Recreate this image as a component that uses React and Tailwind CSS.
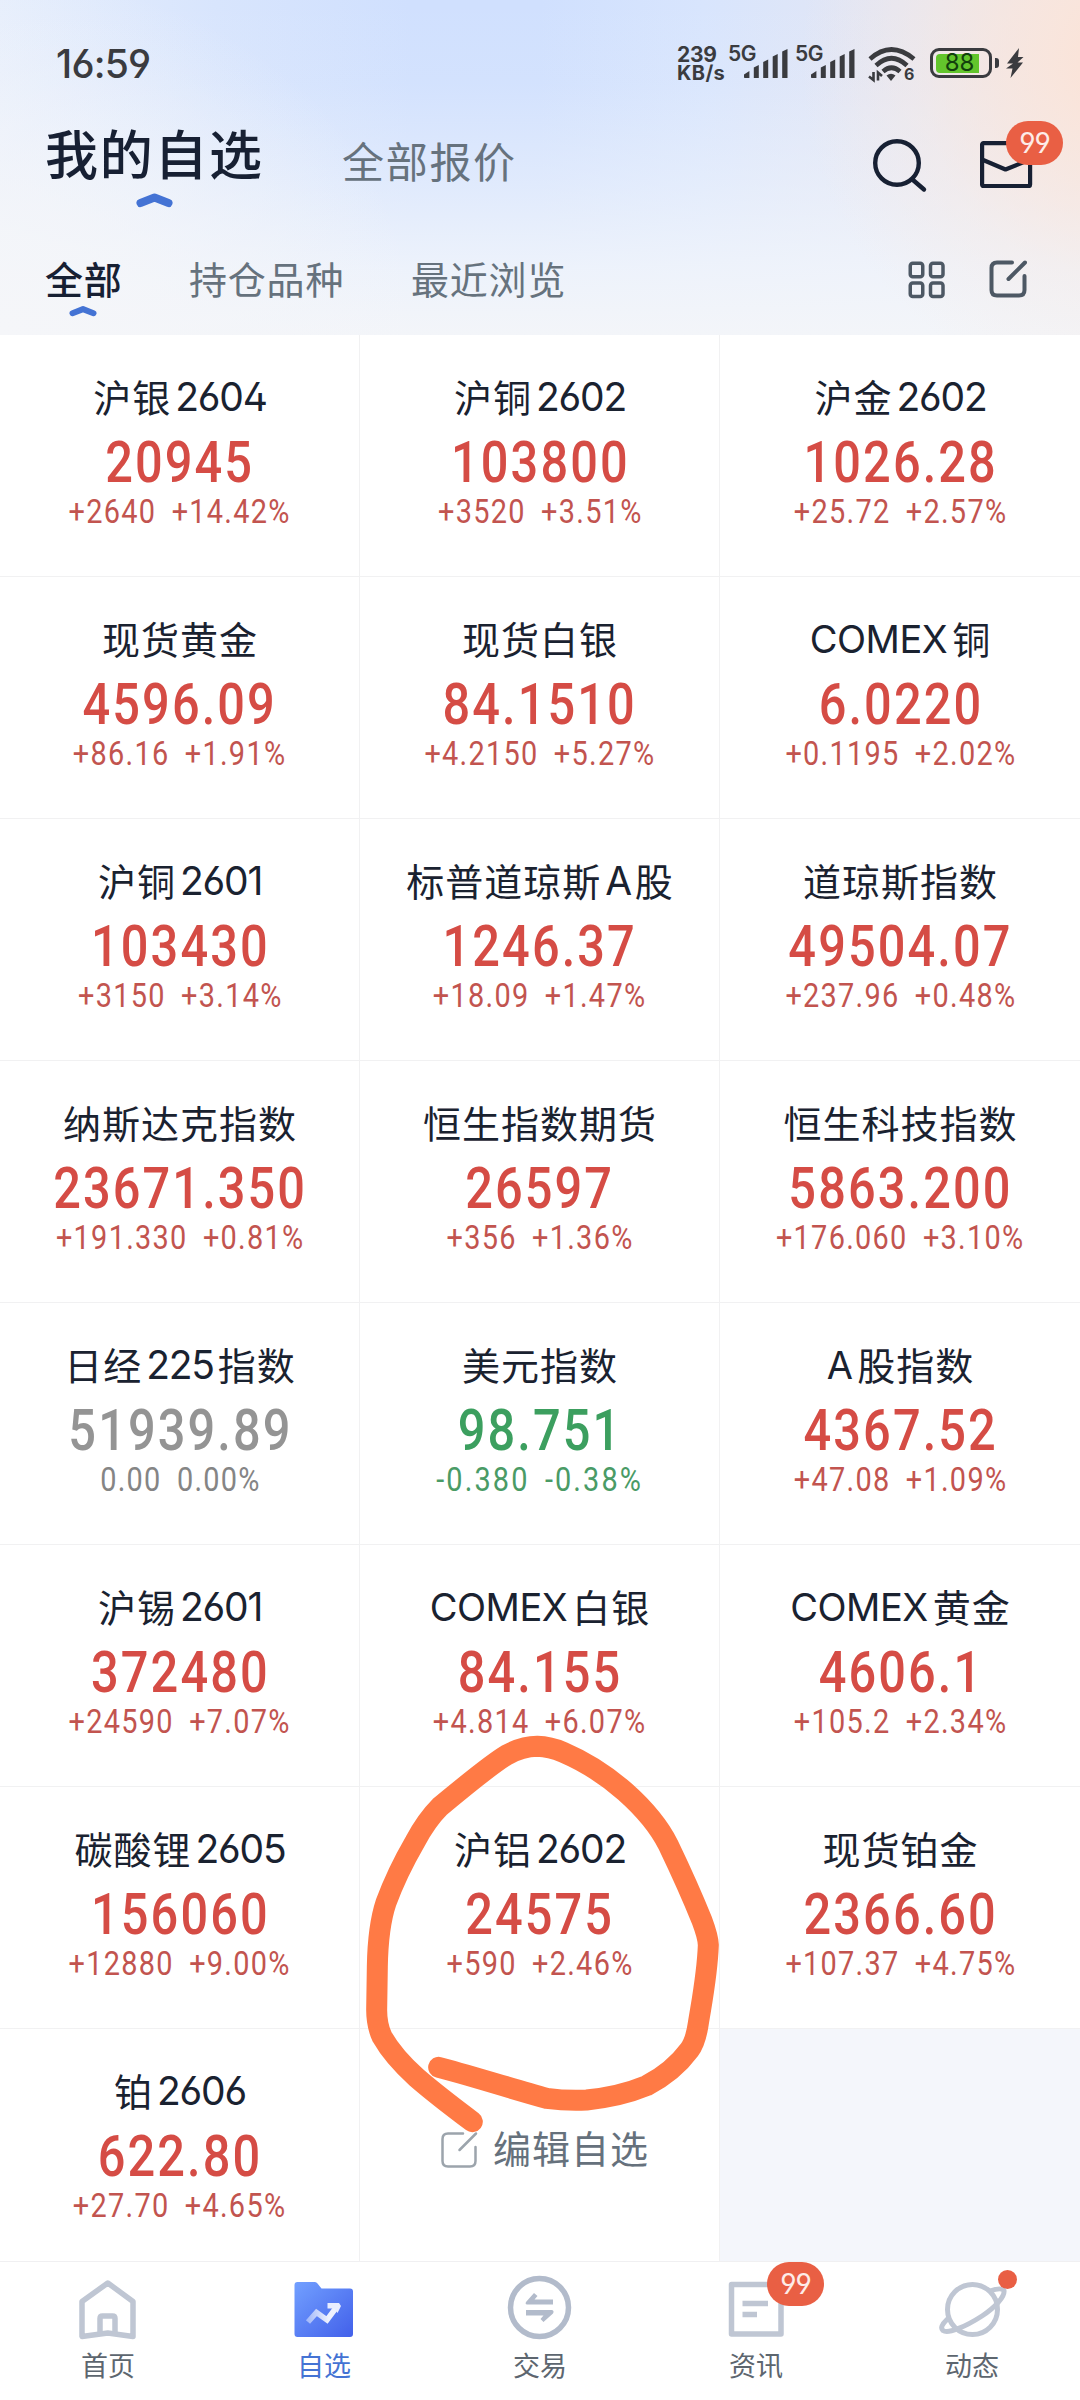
const quotes = [
  { name: "沪银", code: "2604", price: "20945", diff: "+2640", pct: "+14.42%" },
  { name: "沪铜", code: "2602", price: "103800", diff: "+3520", pct: "+3.51%" },
  { name: "沪金", code: "2602", price: "1026.28", diff: "+25.72", pct: "+2.57%" },
  { name: "现货黄金", price: "4596.09", diff: "+86.16", pct: "+1.91%" },
  { name: "现货白银", price: "84.1510", diff: "+4.2150", pct: "+5.27%" },
  { prefix: "COMEX", name: "铜", price: "6.0220", diff: "+0.1195", pct: "+2.02%" },
  { name: "沪铜", code: "2601", price: "103430", diff: "+3150", pct: "+3.14%" },
  { name: "标普道琼斯", code: "A", suffix: "股", price: "1246.37", diff: "+18.09", pct: "+1.47%" },
  { name: "道琼斯指数", price: "49504.07", diff: "+237.96", pct: "+0.48%" },
  { name: "纳斯达克指数", price: "23671.350", diff: "+191.330", pct: "+0.81%" },
  { name: "恒生指数期货", price: "26597", diff: "+356", pct: "+1.36%" },
  { name: "恒生科技指数", price: "5863.200", diff: "+176.060", pct: "+3.10%" },
  { name: "日经", code: "225", suffix: "指数", price: "51939.89", diff: "0.00", pct: "0.00%", trend: "flat" },
  { name: "美元指数", price: "98.751", diff: "-0.380", pct: "-0.38%", trend: "down" },
  { prefix: "A", name: "股指数", price: "4367.52", diff: "+47.08", pct: "+1.09%" },
  { name: "沪锡", code: "2601", price: "372480", diff: "+24590", pct: "+7.07%" },
  { prefix: "COMEX", name: "白银", price: "84.155", diff: "+4.814", pct: "+6.07%" },
  { prefix: "COMEX", name: "黄金", price: "4606.1", diff: "+105.2", pct: "+2.34%" },
  { name: "碳酸锂", code: "2605", price: "156060", diff: "+12880", pct: "+9.00%" },
  { name: "沪铝", code: "2602", price: "24575", diff: "+590", pct: "+2.46%" },
  { name: "现货铂金", price: "2366.60", diff: "+107.37", pct: "+4.75%" },
  { name: "铂", code: "2606", price: "622.80", diff: "+27.70", pct: "+4.65%" },
];

const priceColors = {
  up: "text-[#d54c45]",
  down: "text-[#3c9f5f]",
  flat: "text-[#949494]",
};

const diffColors = {
  up: "tracking-[1.500px] text-[#c2544f]",
  down: "tracking-[2.500px] text-[#4a9b66]",
  flat: "tracking-[1.500px] text-[#858585]",
};

function Signal() {
  return (
    <div className="relative h-[34px] w-[61px]">
      <span className="absolute left-0 top-0 font-['Inter'] text-[21px] font-semibold leading-[18px] tracking-[-0.5px]">
        5G
      </span>
      <svg className="absolute left-4 top-1" width="45" height="30" viewBox="0 0 45 30" fill="currentColor">
        <path d="M0 25.5 5.4 22v7H.8q-.8 0-.8-.8zM9.8 18.5l5-2.500V29h-5zM19.2 13l5-2.500V29h-5zM28.700 7.500l5-2.500V29h-5zM38.200 2.500l5.300-2.500V29h-5.300z" />
      </svg>
    </div>
  );
}

function StatusBar() {
  return (
    <div className="flex h-[84px] items-end pl-[56px] pr-[56px] text-[#3a3b3f]">
      <span className="font-['Inter'] text-[39px] font-medium leading-[40px] tracking-[-0.8px] [font-feature-settings:'ss01']">16:59</span>
      <div className="ml-auto flex items-start">
        <div className="w-[51px] font-['Inter'] text-[21px] font-bold leading-[19px]">
          <div className="tracking-[-0.3px]">239</div>
          <div className="text-[20px] tracking-[0.4px]">KB/s</div>
        </div>
        <Signal />
        <div className="ml-[6px]">
          <Signal />
        </div>
        {/* wifi 6 */}
        <svg className="ml-[12px] mt-[1px]" width="48" height="38" viewBox="0 0 48 38" fill="none" stroke="currentColor" strokeWidth="4.600">
          <path d="M2 13Q23 -6 46 13M8 19.500Q23.500 5 39 19.500M15 25.500Q23.500 18 32 25.500" />
          <path d="M18.500 29.500Q23 26 27.500 29.500L23 35z" fill="currentColor" stroke="none" />
          <path d="M5.500 26v8L1 30.500M10 34.500v-8l4 3.500" strokeWidth="2.600" />
          <text x="36" y="34" fill="currentColor" stroke="none" className="font-['Inter'] text-[16px] font-bold">
            6
          </text>
        </svg>
        <div className="ml-[14px] mt-[3px] flex h-[30px] w-[62px] items-center rounded-[9px] border-[3px] border-[#3a3b3f] px-[3px]">
          <div className="flex h-[19px] w-[43px] items-center justify-center rounded-l-[4px] bg-[#62c52c] pl-[4px] font-['Inter'] text-[24px] leading-none text-[#12400d]">
            88
          </div>
        </div>
        <div className="ml-[3px] mt-[13px] h-[10px] w-[4px] rounded-r-[3px] bg-[#3a3b3f]" />
        <svg className="ml-[7px] mt-[3px]" width="18" height="30" viewBox="0 0 18 30" fill="currentColor">
          <path d="M13 0 1 15.500h6L0 20.500h6.500L4.500 30 17 14.500h-5.500L17.500 9H12z" />
        </svg>
      </div>
    </div>
  );
}

function Chevron({ className }) {
  return (
    <svg className={className} viewBox="0 0 37 16" fill="none" stroke="#4473d4" strokeWidth="8" strokeLinecap="round" strokeLinejoin="round">
      <path d="M4.500 11 18.500 5.500 32.500 11" />
    </svg>
  );
}

function EditIcon({ strokeWidth, className }) {
  return (
    <svg className={className} width="38" height="38" viewBox="0 0 38 38" fill="none" stroke="currentColor" strokeWidth={strokeWidth} strokeLinecap="round" strokeLinejoin="round">
      <path d="M23 2.500H8Q2.500 2.500 2.500 8V30Q2.500 35.500 8 35.500H30Q35.500 35.500 35.500 30V16" />
      <path d="M36 2.500 19.500 19" />
    </svg>
  );
}

function Header() {
  return (
    <header className="h-[335px] bg-[radial-gradient(ellipse_330px_340px_at_1130px_60px,#fce2d5_0%,#fae5dbd9_25%,#f7e9e366_65%,#f7e9e300_100%),radial-gradient(ellipse_420px_360px_at_0px_335px,#f5f6f9_0%,#f5f6f9b3_35%,#f5f6f900_100%),linear-gradient(180deg,#f0f4fb00_0%,#f0f4fb1a_25%,#f0f4fb80_55%,#f0f4fbe6_80%,#f3f5f9_100%),linear-gradient(90deg,#e6eefc_0%,#d8e5fd_20%,#d0e0fe_38%,#d0e0fe_50%,#d8e5fd_65%,#e3e6f4_82%,#f0e6e6_100%)] font-['Noto_Sans_CJK_SC',sans-serif]">
      <StatusBar />
      <div className="flex h-[136px] pl-[45px] pr-[47px]">
        <div className="w-[217px] pt-[32px]">
          <div className="text-[53px] font-medium leading-[72px] tracking-[1.700px] whitespace-nowrap text-[#172033]">我的自选</div>
          <Chevron className="mt-[4px] ml-[91px] h-4 w-[37px]" />
        </div>
        <div className="ml-[80px] pt-[48px] text-[42px] leading-[56px] tracking-[1.700px] text-[#66727d]">全部报价</div>
        <svg className="ml-auto mt-[53px] text-[#172033]" width="56" height="56" viewBox="0 0 56 56" fill="none" stroke="currentColor" strokeWidth="4.400" strokeLinecap="round">
          <circle cx="25" cy="26" r="21.800" />
          <path d="M41 43 52 52.500" />
        </svg>
        <div className="relative ml-[51px] mt-[57px] h-[47px] w-[54px] text-[#172033]">
          <svg width="54" height="47" viewBox="0 0 54 47" fill="none" stroke="currentColor" strokeWidth="4.200" strokeLinejoin="round">
            <rect x="3.100" y="2.100" width="48" height="43" rx="1.500" />
            <path d="M3 18.500 26.500 28.500 51 18.500" />
          </svg>
          <span className="absolute -top-[20px] left-[27px] flex h-[44px] w-[57px] items-center justify-center rounded-full bg-[#e95f44] font-['Inter'] text-[28px] tracking-[-1px] text-[#fdece8] [font-feature-settings:'ss01']">
            99
          </span>
        </div>
      </div>
      <div className="flex items-start pl-[45px] pr-[53px] pt-[34px] text-[38px] leading-[48px] tracking-[0.800px] text-[#66727d]">
        <div className="w-[144px] text-[#172033]">
          <div className="font-medium">全部</div>
          <Chevron className="ml-[24px] mt-[3px] h-3 w-[28px]" />
        </div>
        <div className="w-[222px]">持仓品种</div>
        <div>最近浏览</div>
        <svg className="ml-auto mt-[7px] text-[#4d5864]" width="38" height="38" viewBox="0 0 38 38" fill="none" stroke="currentColor" strokeWidth="3.500">
          <rect x="2.250" y="2.250" width="12.500" height="13.500" rx="2.500" />
          <rect x="22.500" y="2.250" width="12.500" height="13.500" rx="2.500" />
          <rect x="2.250" y="22" width="12.500" height="13.500" rx="2.500" />
          <rect x="22.500" y="22" width="12.500" height="13.500" rx="2.500" />
        </svg>
        <EditIcon strokeWidth="4" className="ml-[43px] mt-[6px] text-[#4d5864]" />
      </div>
    </header>
  );
}

function QuoteCard({ quote }) {
  const trend = quote.trend || "up";
  return (
    <div className="flex h-[242px] flex-col items-center border-r border-b border-[#f1f1f2] bg-white pt-[35px] pl-[1px] whitespace-nowrap nth-[3n]:border-r-0">
      <div className="flex h-[52px] items-center gap-[4px] text-[38px] leading-[52px] tracking-[1px] text-[#1a2230]">
        {quote.prefix && <span className="mr-[1px] mt-[2px] font-['Inter'] text-[38px] tracking-[-0.5px]">{quote.prefix}</span>}
        <span className="font-['Noto_Sans_CJK_SC',sans-serif]">{quote.name}</span>
        {quote.code && <span className="mt-[2px] font-['Inter'] text-[39px] tracking-[-1.200px] [font-feature-settings:'ss01']">{quote.code}</span>}
        {quote.suffix && <span className="font-['Noto_Sans_CJK_SC',sans-serif]">{quote.suffix}</span>}
      </div>
      <div className={`mt-[10px] scale-x-[0.84] font-['Roboto'] text-[58px] font-medium leading-[60px] tracking-[2.500px] ${priceColors[trend]}`}>
        {quote.price}
      </div>
      <div className={`flex scale-x-[0.85] gap-[18px] font-['Roboto'] text-[34px] leading-[38px] ${diffColors[trend]}`}>
        <span>{quote.diff}</span>
        <span>{quote.pct}</span>
      </div>
    </div>
  );
}

function NavItem({ label, active, badge, dot, children }) {
  return (
    <div className="flex flex-1 flex-col items-center pt-[12px]">
      <div className="relative h-[66px] w-[72px] text-[#bfc6d3]">
        {children}
        {badge && (
          <span className="absolute -top-[12px] left-[47px] flex h-[44px] w-[57px] items-center justify-center rounded-full bg-[#e95f44] font-['Inter'] text-[28px] tracking-[-1px] text-[#fdece8] [font-feature-settings:'ss01']">
            {badge}
          </span>
        )}
        {dot && <span className="absolute -top-[4px] left-[62px] h-[19px] w-[19px] rounded-full bg-[#e95f44]" />}
      </div>
      <div className={`font-['Noto_Sans_CJK_SC',sans-serif] text-[27px] leading-[50px] ${active ? "text-[#4473d4]" : "text-[#5d666f]"}`}>{label}</div>
    </div>
  );
}

function BottomNav() {
  return (
    <nav className="flex h-[139px] border-t border-[#f0f0f2] bg-white">
      <NavItem label="首页">
        <svg width="72" height="66" viewBox="0 0 72 66" fill="none" stroke="currentColor" strokeWidth="5.500" strokeLinejoin="round">
          <path d="M10 27.500 35.800 9 61 27.500V62.500L35.800 59 10 62.500z" />
          <path d="M28 60V44.500q0-2.500 2.500-2.500h10q2.500 0 2.500 2.500V60" />
        </svg>
      </NavItem>
      <NavItem label="自选" active>
        <svg width="72" height="66" viewBox="0 0 72 66">
          <defs>
            <linearGradient id="folder" x1="0" y1="0" x2="1" y2="1">
              <stop offset="0" stopColor="#72a0ff" />
              <stop offset="1" stopColor="#4260ea" />
            </linearGradient>
            <linearGradient id="trend" x1="0" y1="0" x2="1" y2="0">
              <stop offset="0" stopColor="#fff" stopOpacity="0.45" />
              <stop offset="0.700" stopColor="#fff" stopOpacity="0.900" />
            </linearGradient>
          </defs>
          <path d="M6.500 11q0-3 3-3H27q1.500 0 2.500 1.500L33.500 14.500H62q3 0 3 3V60q0 3-3 3H9.500q-3 0-3-3z" fill="url(#folder)" />
          <path d="M20 48 28.500 38.500 39 46 49 32.500" fill="none" stroke="url(#trend)" strokeWidth="5.500" />
          <path d="M39.500 29H51l2 3-3.500 7-3-4.500h-7z" fill="#e8edff" />
        </svg>
      </NavItem>
      <NavItem label="交易">
        <svg className="text-[#b2bbcb]" width="72" height="66" viewBox="0 0 72 66" fill="none" stroke="currentColor" strokeWidth="5.500">
          <circle cx="35.500" cy="33.500" r="29" />
          <path d="M22 28 30 19 33.500 22 30.500 25.500H49V30.500H23Q21 30.500 22 28zM22 36H48Q50.500 36.500 49 39.500L39.500 48 36.500 45 39.500 41.500H22z" fill="currentColor" stroke="none" />
        </svg>
      </NavItem>
      <NavItem label="资讯" badge="99">
        <svg width="72" height="66" viewBox="0 0 72 66" fill="none" stroke="currentColor" strokeWidth="5.500" strokeLinejoin="round">
          <path d="M11.500 10.500H61V60H11.500zM22.500 29.500H48M22.500 40.500H37" />
        </svg>
      </NavItem>
      <NavItem label="动态" dot>
        <svg width="72" height="66" viewBox="0 0 72 66" fill="none" stroke="currentColor" strokeWidth="5" strokeLinecap="round">
          <circle cx="36.500" cy="35.500" r="25" />
          <path d="M54 17Q65 13 68 16.500C69 22 60 33 46 42 29 53 12 60 7 56.500Q3 53 11 45.500" />
        </svg>
      </NavItem>
    </nav>
  );
}

export default function App() {
  return (
    <div className="h-[2400px] w-[1080px] overflow-hidden bg-[#f4f6fb]">
      <Header />
      <main className="relative h-[1926px] overflow-hidden">
        <div className="grid grid-cols-3">
          {quotes.map((q) => (
            <QuoteCard key={q.name + q.price} quote={q} />
          ))}
          <div className="flex h-[242px] items-start justify-center gap-[15px] border-r border-[#f1f1f2] bg-white pt-[92px] pl-[10px] font-['Noto_Sans_CJK_SC',sans-serif] text-[38px] leading-[52px] tracking-[1px] text-[#66717c]">
            <EditIcon strokeWidth="2.500" className="mt-[10px] text-[#9ca4ac]" />
            编辑自选
          </div>
        </div>
        {/* hand-drawn marker around 沪铝 */}
        <svg className="absolute left-[350px] top-[1385px]" width="400" height="500" viewBox="0 0 1200 1500" fill="none" stroke="#ff7a45" strokeWidth="63" strokeLinecap="round" strokeLinejoin="round">
          <path d="M266 1042 C340 1060 480 1105 590 1135 Q650 1143 710 1140 Q810 1130 890 1097 Q970 1055 1018 990 Q1037 965 1045 910 C1058 830 1072 760 1075 675 Q1074 650 1056 602 Q1015 500 955 375 Q915 295 825 215 Q740 140 640 97 Q600 80 562 79 Q515 80 470 105 Q420 135 270 260 Q230 300 195 365 Q140 460 108 548 Q84 620 82 740 L80 870 Q80 915 96 950 Q130 1010 200 1073 Q260 1125 367 1205" />
        </svg>
      </main>
      <BottomNav />
    </div>
  );
}
